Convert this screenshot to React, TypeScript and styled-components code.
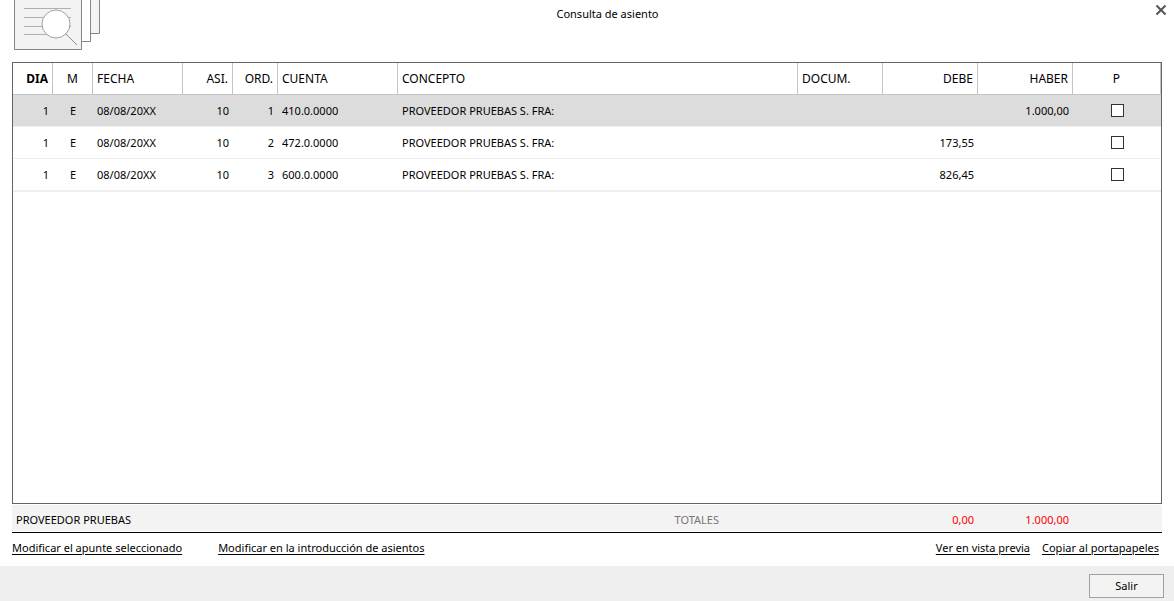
import React from "react";
import styled, { createGlobalStyle } from "styled-components";

type Align = "left" | "center" | "right";

const GlobalStyle = createGlobalStyle`
  *, *::before, *::after { box-sizing: border-box; }
  body {
    margin: 0;
    background: #fff;
    color: #000;
    font: 11px/16px "Noto Sans", "Open Sans", sans-serif;
  }
`;

const Window = styled.div`
  display: flex;
  flex-direction: column;
  min-height: 100vh;
`;

const Header = styled.header`
  display: flex;
  align-items: flex-start;
  height: 62px;
  padding: 0 7px 0 14px;
`;

const Title = styled.h1`
  flex: 1;
  margin: 0;
  padding: 6px 0 0;
  font-size: 11px;
  font-weight: 400;
  text-align: center;
`;

const CloseSlot = styled.div`
  display: flex;
  justify-content: flex-end;
  width: 52px;
  padding-top: 4px;
`;

const CloseButton = styled.button`
  display: flex;
  padding: 0;
  border: 0;
  background: none;
`;

const Main = styled.main`
  flex: 1;
  display: flex;
  flex-direction: column;
  padding: 0 12px;
`;

const GridPanel = styled.section`
  flex: 1;
  border: 1px solid #646464;
`;

const Table = styled.table`
  width: 100%;
  table-layout: fixed;
  border-collapse: separate;
  border-spacing: 0;
  border-bottom: 1px solid #eee;
`;

const Col = styled.col<{ $width?: number }>`
  width: ${(p) => (p.$width ? `${p.$width}px` : "auto")};
`;

const HeadCell = styled.th<{ $align: Align; $bold?: boolean }>`
  height: 32px;
  padding: 0 4px;
  border-right: 1px solid #c3c3c3;
  border-bottom: 1px solid #c3c3c3;
  font-size: 12px;
  font-weight: ${(p) => (p.$bold ? 700 : 400)};
  text-align: ${(p) => p.$align};
  white-space: nowrap;
`;

const Row = styled.tr<{ $selected?: boolean }>`
  background: ${(p) => (p.$selected ? "#dcdcdc" : "#fff")};
`;

const Cell = styled.td<{ $align: Align }>`
  height: 32px;
  padding: 0 4px;
  border-bottom: 1px solid #eee;
  text-align: ${(p) => p.$align};
  white-space: nowrap;
`;

const Check = styled.input`
  appearance: none;
  display: block;
  width: 13px;
  height: 13px;
  margin: 0 auto;
  border: 1px solid #333;
  background: #fff;

  &:checked {
    box-shadow: inset 0 0 0 2px #fff;
    background: #333;
  }
`;

const Totals = styled.div`
  display: grid;
  grid-template-columns: 1fr auto 255px 95px;
  align-items: center;
  height: 26px;
  margin-top: 1px;
  padding: 4px 93px 0 4px;
  background: #f3f3f3;
`;

const TotalLabel = styled.span`
  color: #7c7478;
`;

const TotalValue = styled.output`
  color: #ff0000;
  text-align: right;
`;

const Links = styled.nav`
  display: flex;
  justify-content: space-between;
  margin-top: 1px;
  padding: 7px 3px 10px 0;
  border-top: 1px solid #000;
`;

const LinkGroup = styled.div<{ $gap: number }>`
  display: flex;
  gap: ${(p) => p.$gap}px;
`;

const Link = styled.a`
  color: #000;
  text-decoration: underline;
  text-underline-offset: 2px;
`;

const Footer = styled.footer`
  display: flex;
  justify-content: flex-end;
  padding: 8px 10px 3px;
  background: #efefef;
`;

const ExitButton = styled.button`
  width: 75px;
  height: 24px;
  padding: 0;
  border: 1px solid #a0a0a0;
  background: #f3f3f3;
  color: #000;
  font: inherit;
`;

const columns: { label: string; align: Align; width?: number; bold?: boolean }[] = [
  { label: "DIA", align: "right", width: 40, bold: true },
  { label: "M", align: "center", width: 40 },
  { label: "FECHA", align: "left", width: 90 },
  { label: "ASI.", align: "right", width: 50 },
  { label: "ORD.", align: "right", width: 45 },
  { label: "CUENTA", align: "left", width: 120 },
  { label: "CONCEPTO", align: "left" },
  { label: "DOCUM.", align: "left", width: 85 },
  { label: "DEBE", align: "right", width: 95 },
  { label: "HABER", align: "right", width: 95 },
  { label: "P", align: "center", width: 88 },
];

const entries = [
  ["1", "E", "08/08/20XX", "10", "1", "410.0.0000", "PROVEEDOR PRUEBAS S. FRA:", "", "", "1.000,00"],
  ["1", "E", "08/08/20XX", "10", "2", "472.0.0000", "PROVEEDOR PRUEBAS S. FRA:", "", "173,55", ""],
  ["1", "E", "08/08/20XX", "10", "3", "600.0.0000", "PROVEEDOR PRUEBAS S. FRA:", "", "826,45", ""],
];

const DocumentsIcon = () => (
  <svg width="86" height="50" viewBox="0 0 86 50" fill="none" stroke="#868686" aria-hidden="true">
    <path d="M67 -2H85.5V33.5H67Z" fill="#f3f3f3" />
    <path d="M58 -2H76.5V41.5H58Z" fill="#fff" />
    <path d="M0.5 -2H67.5V49.5H0.5Z" fill="#f3f3f3" />
    <path d="M10 8.5H57M10 17.5H57M10 26.5H57M10 34.5H48" stroke="#b0b0b0" />
    <circle cx="42" cy="24" r="14" fill="#fff" stroke="#a0a0a0" />
    <path d="M52 34L63 45" stroke="#8c8c8c" />
  </svg>
);

export default function App() {
  return (
    <Window>
      <GlobalStyle />
      <Header>
        <DocumentsIcon />
        <Title>Consulta de asiento</Title>
        <CloseSlot>
          <CloseButton type="button" aria-label="Cerrar">
            <svg width="12" height="12" viewBox="0 0 12 12" stroke="#555" strokeWidth="2">
              <path d="M1.5 1.5L10.5 10.5M10.5 1.5L1.5 10.5" />
            </svg>
          </CloseButton>
        </CloseSlot>
      </Header>
      <Main>
        <GridPanel>
          <Table>
            <colgroup>
              {columns.map((c) => (
                <Col key={c.label} $width={c.width} />
              ))}
            </colgroup>
            <thead>
              <tr>
                {columns.map((c) => (
                  <HeadCell key={c.label} scope="col" $align={c.align} $bold={c.bold}>
                    {c.label}
                  </HeadCell>
                ))}
              </tr>
            </thead>
            <tbody>
              {entries.map((entry, i) => (
                <Row key={entry[4]} $selected={i === 0}>
                  {entry.map((value, j) => (
                    <Cell key={columns[j].label} $align={columns[j].align}>
                      {value}
                    </Cell>
                  ))}
                  <Cell $align="center">
                    <Check type="checkbox" aria-label={`P, orden ${entry[4]}`} />
                  </Cell>
                </Row>
              ))}
            </tbody>
          </Table>
        </GridPanel>
        <Totals>
          <span>PROVEEDOR PRUEBAS</span>
          <TotalLabel>TOTALES</TotalLabel>
          <TotalValue>0,00</TotalValue>
          <TotalValue>1.000,00</TotalValue>
        </Totals>
        <Links>
          <LinkGroup $gap={36}>
            <Link href="#apunte">Modificar el apunte seleccionado</Link>
            <Link href="#introduccion">Modificar en la introducción de asientos</Link>
          </LinkGroup>
          <LinkGroup $gap={12}>
            <Link href="#vista-previa">Ver en vista previa</Link>
            <Link href="#portapapeles">Copiar al portapapeles</Link>
          </LinkGroup>
        </Links>
      </Main>
      <Footer>
        <ExitButton type="button">Salir</ExitButton>
      </Footer>
    </Window>
  );
}
